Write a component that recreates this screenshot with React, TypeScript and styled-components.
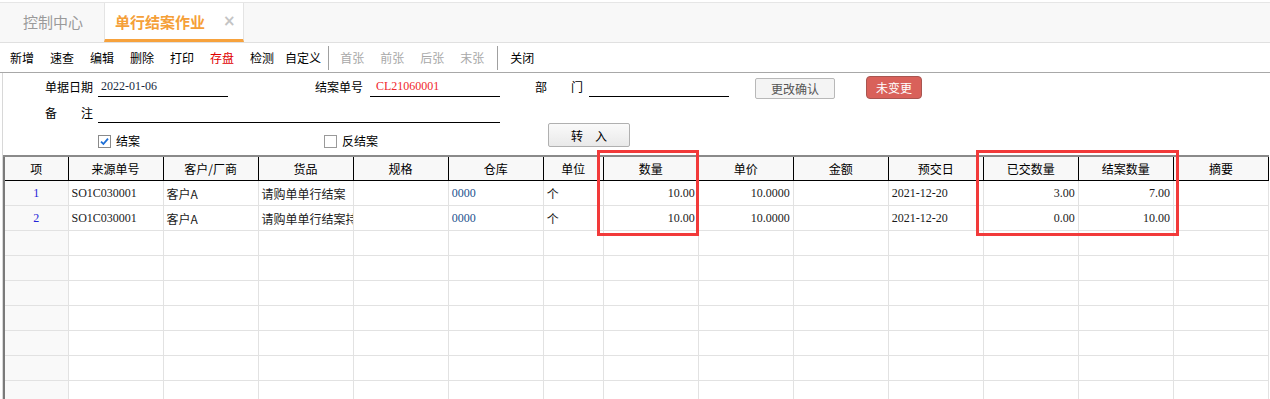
import React from 'react';
import styled, { createGlobalStyle, css } from 'styled-components';

const GlobalStyle = createGlobalStyle`
  html, body {
    margin: 0;
    padding: 0;
    background: #fff;
    overflow: hidden;
  }
  body {
    font-family: "Noto Sans CJK SC", "Noto Sans", sans-serif;
    font-size: 12px;
    color: #000;
  }
`;

type ToolItem = { label: string; tone?: 'red' | 'off'; pad?: string; sepAfter?: [number, number] };

const tools: ToolItem[] = [
  { label: '新增' },
  { label: '速查' },
  { label: '编辑' },
  { label: '删除' },
  { label: '打印' },
  { label: '存盘', tone: 'red' },
  { label: '检测' },
  { label: '自定义', pad: '0 3px', sepAfter: [4, 3] },
  { label: '首张', tone: 'off' },
  { label: '前张', tone: 'off' },
  { label: '后张', tone: 'off' },
  { label: '末张', tone: 'off', sepAfter: [5, 4] },
  { label: '关闭' },
];

type Col = { title: string; width: number };

const columns: Col[] = [
  { title: '项', width: 64 },
  { title: '来源单号', width: 95 },
  { title: '客户/厂商', width: 95 },
  { title: '货品', width: 95 },
  { title: '规格', width: 95 },
  { title: '仓库', width: 95 },
  { title: '单位', width: 60 },
  { title: '数量', width: 95 },
  { title: '单价', width: 95 },
  { title: '金额', width: 95 },
  { title: '预交日', width: 95 },
  { title: '已交数量', width: 95 },
  { title: '结案数量', width: 95 },
  { title: '摘要', width: 95 },
];

const rows = [
  { no: 1, src: 'SO1C030001', cust: '客户A', item: '请购单单行结案', wh: '0000', unit: '个', qty: '10.00', price: '10.0000', due: '2021-12-20', done: '3.00', close: '7.00' },
  { no: 2, src: 'SO1C030001', cust: '客户A', item: '请购单单行结案持', wh: '0000', unit: '个', qty: '10.00', price: '10.0000', due: '2021-12-20', done: '0.00', close: '10.00' },
];

const EMPTY_ROWS = 8;

const App = () => {
  return (
    <Page>
      <GlobalStyle />
      <TabBar>
        <Tab>控制中心</Tab>
        <Tab $active>
          单行结案作业
          <TabClose>×</TabClose>
        </Tab>
      </TabBar>

      <Toolbar>
        {tools.map((t) => (
          <React.Fragment key={t.label}>
            <ToolBtn $tone={t.tone} $pad={t.pad}>
              {t.label}
            </ToolBtn>
            {t.sepAfter && <ToolSep $ml={t.sepAfter[0]} $mr={t.sepAfter[1]} />}
          </React.Fragment>
        ))}
      </Toolbar>

      <Body>
        <FormArea>
          <FormRow $h={28}>
            <Label>单据日期</Label>
            <Field $w={130}>
              <FieldValue>2022-01-06</FieldValue>
            </Field>
            <Label $ml={87}>结案单号</Label>
            <Field $w={130} $ml={7}>
              <FieldValue $red $pl={6}>CL21060001</FieldValue>
            </Field>
            <Label $ml={35} $spread>
              <span>部</span>
              <span>门</span>
            </Label>
            <Field $w={140} $ml={6} />
            <PlainButton>更改确认</PlainButton>
            <AlertButton>未变更</AlertButton>
          </FormRow>

          <FormRow $h={24}>
            <Label $spread>
              <span>备</span>
              <span>注</span>
            </Label>
            <Field $w={402} />
          </FormRow>

          <FormRow $h={26} $top>
            <CheckLabel $ml={53}>
              <CheckBox $checked>
                <svg width="11" height="11" viewBox="0 0 11 11">
                  <path d="M2 5.6 L4.4 8 L9 2.6" fill="none" stroke="#1d6fd6" strokeWidth="1.8" />
                </svg>
              </CheckBox>
              结案
            </CheckLabel>
            <CheckLabel $ml={184}>
              <CheckBox />
              反结案
            </CheckLabel>
            <InButton>转　入</InButton>
          </FormRow>
        </FormArea>

        <TableArea>
          <Grid>
            <colgroup>
              {columns.map((c) => (
                <col key={c.title} style={{ width: c.width }} />
              ))}
            </colgroup>
            <thead>
              <tr>
                {columns.map((c) => (
                  <HeadCell key={c.title}>{c.title}</HeadCell>
                ))}
              </tr>
            </thead>
            <tbody>
              {rows.map((r) => (
                <tr key={r.no}>
                  <IndexCell>{r.no}</IndexCell>
                  <Cell $serif>{r.src}</Cell>
                  <Cell>{r.cust}</Cell>
                  <Cell>{r.item}</Cell>
                  <Cell />
                  <Cell $serif $blue>{r.wh}</Cell>
                  <Cell>{r.unit}</Cell>
                  <Cell $serif $right>{r.qty}</Cell>
                  <Cell $serif $right>{r.price}</Cell>
                  <Cell />
                  <Cell $serif>{r.due}</Cell>
                  <Cell $serif $right>{r.done}</Cell>
                  <Cell $serif $right>{r.close}</Cell>
                  <Cell />
                </tr>
              ))}
              {Array.from({ length: EMPTY_ROWS }).map((_, i) => (
                <tr key={`e${i}`}>
                  <IndexCell />
                  {columns.slice(1).map((c) => (
                    <Cell key={c.title} />
                  ))}
                </tr>
              ))}
            </tbody>
          </Grid>
          <Highlight $left={596} $width={102} />
          <Highlight $left={975} $width={203} />
        </TableArea>
      </Body>
    </Page>
  );
};

export default App;

const Page = styled.div`
  width: 1270px;
  height: 399px;
  overflow: hidden;
`;

const TabBar = styled.div`
  display: flex;
  margin-top: 2px;
  height: 39px;
  background: #f8f8f8;
  border-top: 1px solid #e6e6e6;
  border-bottom: 1px solid #e0e0e0;
  padding-left: 3px;
`;

const Tab = styled.div<{ $active?: boolean }>`
  display: flex;
  align-items: center;
  height: 39px;
  box-sizing: border-box;
  font-size: 15px;
  color: #9a9a9a;
  padding: 0 21px 2px 20px;
  ${({ $active }) =>
    $active &&
    css`
      background: #fff;
      color: #f5a038;
      font-weight: bold;
      padding: 0 7px 0 10px;
      border-left: 1px solid #e4e4e4;
      border-right: 1px solid #e4e4e4;
      border-bottom: 3px solid #f7a23d;
    `}
`;

const TabClose = styled.span`
  margin-left: 18px;
  font-size: 15px;
  color: #c4c4c4;
  font-family: "DejaVu Sans", sans-serif;
`;

const Toolbar = styled.div`
  display: flex;
  align-items: center;
  height: 29px;
  padding-left: 2px;
  border-bottom: 1px solid #a8a8a8;
`;

const ToolBtn = styled.div<{ $tone?: 'red' | 'off'; $pad?: string }>`
  padding: ${({ $pad }) => $pad ?? '0 8px'};
  font-size: 12px;
  line-height: 16px;
  color: ${({ $tone }) => ($tone === 'red' ? '#e00000' : $tone === 'off' ? '#a8a8a8' : '#000')};
  cursor: default;
`;

const ToolSep = styled.div<{ $ml: number; $mr: number }>`
  width: 1px;
  height: 24px;
  background: #a0a0a0;
  margin: 0 ${({ $mr }) => $mr}px 0 ${({ $ml }) => $ml}px;
`;

const Body = styled.div`
  border-left: 1px solid #d8d8d8;
  margin-left: 2px;
`;

const FormArea = styled.div`
  padding-left: 42px;
  height: 81px;
  margin-bottom: 1px;
`;

const FormRow = styled.div<{ $h: number; $top?: boolean }>`
  display: flex;
  align-items: ${({ $top }) => ($top ? 'flex-start' : 'center')};
  height: ${({ $h }) => $h}px;
`;

const Label = styled.div<{ $ml?: number; $spread?: boolean }>`
  width: 48px;
  margin-left: ${({ $ml }) => $ml ?? 0}px;
  font-size: 12px;
  line-height: 16px;
  white-space: nowrap;
  ${({ $spread }) =>
    $spread &&
    css`
      display: flex;
      justify-content: space-between;
    `}
`;

const Field = styled.div<{ $w: number; $ml?: number }>`
  width: ${({ $w }) => $w}px;
  height: 18px;
  margin-left: ${({ $ml }) => $ml ?? 5}px;
  border-bottom: 1px solid #000;
  display: flex;
  align-items: center;
`;

const FieldValue = styled.span<{ $red?: boolean; $pl?: number }>`
  padding-left: ${({ $pl }) => $pl ?? 3}px;
  font-family: "Liberation Serif", serif;
  font-size: 12px;
  color: ${({ $red }) => ($red ? '#f0262c' : '#1a2a40')};
`;

const PlainButton = styled.div`
  margin: 2px 0 0 26px;
  width: 80px;
  height: 21px;
  box-sizing: border-box;
  display: flex;
  align-items: center;
  justify-content: center;
  background: #f4f4f4;
  border: 1px solid #b8b8b8;
  border-radius: 2px;
  color: #555;
  font-size: 12px;
`;

const AlertButton = styled.div`
  margin: 0 0 0 31px;
  width: 56px;
  height: 23px;
  box-sizing: border-box;
  display: flex;
  align-items: center;
  justify-content: center;
  background: #d9615a;
  border: 1px solid #a85550;
  border-radius: 4px;
  color: #fff;
  font-size: 12px;
`;

const CheckLabel = styled.label<{ $ml: number }>`
  display: flex;
  align-items: center;
  margin: 8px 0 0 ${({ $ml }) => $ml}px;
  font-size: 12px;
  line-height: 16px;
`;

const CheckBox = styled.span<{ $checked?: boolean }>`
  width: 13px;
  height: 13px;
  box-sizing: border-box;
  border: 1px solid ${({ $checked }) => ($checked ? '#8a8a8a' : '#9a9a9a')};
  background: #fff;
  margin-right: 5px;
  display: flex;
  align-items: center;
  justify-content: center;
`;

const InButton = styled.div`
  margin: -2px 0 0 170px;
  width: 82px;
  height: 24px;
  box-sizing: border-box;
  display: flex;
  align-items: center;
  justify-content: center;
  background: linear-gradient(#fafafa, #e9e9e9);
  border: 1px solid #b0b0b0;
  border-radius: 2px;
  font-size: 12px;
`;

const TableArea = styled.div`
  position: relative;
  margin-top: 1px;
  margin-left: -2px;
`;

const Grid = styled.table`
  table-layout: fixed;
  border-collapse: collapse;
  width: 1266px;
  margin-left: 2px;
  border-left: 2px solid #7a7a7a;
  border-top: 2px solid #8a8a8a;
`;

const HeadCell = styled.th`
  height: 23px;
  padding: 0;
  background: #f8f8f8;
  border-right: 1px solid #000;
  border-bottom: 1px solid #000;
  font-weight: normal;
  font-size: 12px;
  text-align: center;
  white-space: nowrap;
`;

const Cell = styled.td<{ $serif?: boolean; $right?: boolean; $blue?: boolean }>`
  height: 24px;
  padding: 0 3px;
  border-right: 1px solid #e2e2e2;
  border-bottom: 1px solid #e2e2e2;
  font-size: 12px;
  white-space: nowrap;
  overflow: hidden;
  text-align: ${({ $right }) => ($right ? 'right' : 'left')};
  font-family: ${({ $serif }) => ($serif ? '"Liberation Serif", serif' : 'inherit')};
  color: ${({ $blue }) => ($blue ? '#24508f' : '#1a1a1a')};
`;

const IndexCell = styled(Cell)`
  background: #f9f9f9;
  text-align: center;
  font-family: "Liberation Serif", serif;
  color: #2424d8;
`;

const Highlight = styled.div<{ $left: number; $width: number }>`
  position: absolute;
  top: -5px;
  left: ${({ $left }) => $left}px;
  width: ${({ $width }) => $width}px;
  height: 86px;
  box-sizing: border-box;
  border: 3px solid #f23a3a;
  pointer-events: none;
`;
